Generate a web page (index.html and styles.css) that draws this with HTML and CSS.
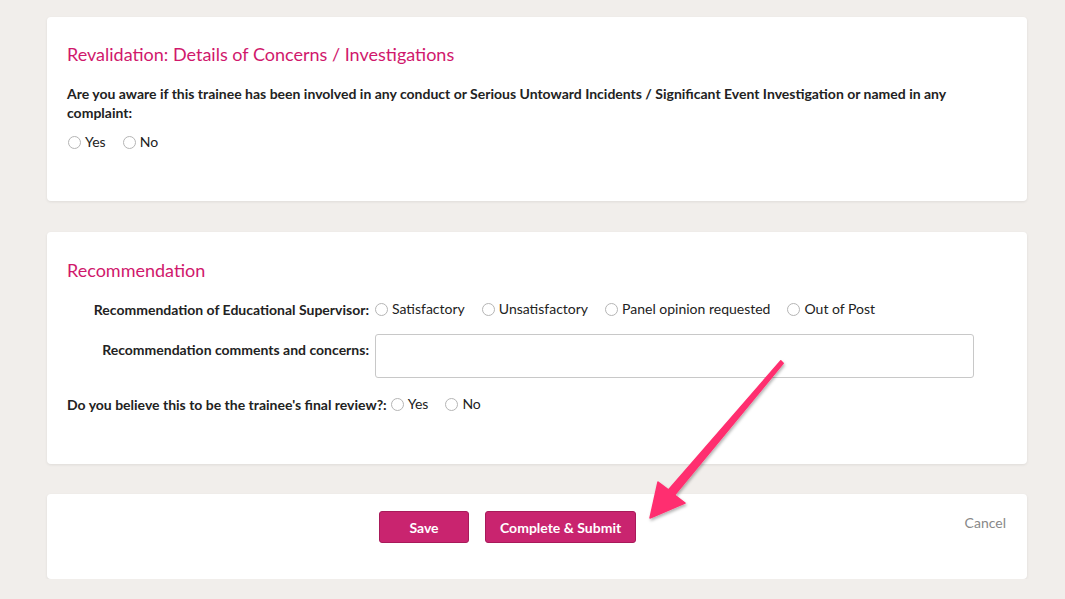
FILE: index.html
```html
<!DOCTYPE html>
<html lang="en">

<head>
    <meta charset="UTF-8">
    <meta name="viewport" content="width=device-width, initial-scale=1.0">
    <title>Review</title>
    <link rel="stylesheet" href="styles.css">
</head>

<body>
    <div class="page">
        <div class="card card-concerns">
            <h2 class="card-title">Revalidation: Details of Concerns / Investigations</h2>
            <p class="question">Are you aware if this trainee has been involved in any conduct or Serious Untoward Incidents / Significant Event Investigation or named in any complaint:</p>
            <div class="choices">
                <label class="choice"><input type="radio" name="concern"> Yes</label>
                <label class="choice"><input type="radio" name="concern"> No</label>
            </div>
        </div>

        <div class="card card-recommend">
            <h2 class="card-title">Recommendation</h2>
            <div class="form-row">
                <label class="row-label">Recommendation of Educational Supervisor:</label>
                <div class="choices">
                    <label class="choice"><input type="radio" name="rec"> Satisfactory</label>
                    <label class="choice"><input type="radio" name="rec"> Unsatisfactory</label>
                    <label class="choice"><input type="radio" name="rec"> Panel opinion requested</label>
                    <label class="choice"><input type="radio" name="rec"> Out of Post</label>
                </div>
            </div>
            <div class="form-row form-row-text">
                <label class="row-label">Recommendation comments and concerns:</label>
                <textarea class="comments"></textarea>
            </div>
            <div class="inline-row">
                <label class="inline-label">Do you believe this to be the trainee's final review?:</label>
                <div class="choices">
                    <label class="choice"><input type="radio" name="final"> Yes</label>
                    <label class="choice"><input type="radio" name="final"> No</label>
                </div>
            </div>
        </div>

        <div class="card card-actions">
            <div class="buttons">
                <button class="btn">Save</button>
                <button class="btn">Complete &amp; Submit</button>
            </div>
            <a class="cancel" href="#">Cancel</a>
        </div>
    </div>

    <svg class="arrow" width="1065" height="599" viewBox="0 0 1065 599">
        <defs>
            <filter id="shadow" x="-20%" y="-20%" width="140%" height="140%">
                <feDropShadow dx="1" dy="2" stdDeviation="1.5" flood-color="#000" flood-opacity="0.3" />
            </filter>
        </defs>
        <polygon points="783.2,363.2 674.6,495.1 685,503 650,518 658,482 668.4,489.9 780.8,360.8"
            fill="#ff2f6f" stroke="#ff2f6f" stroke-width="1.5" stroke-linejoin="round" filter="url(#shadow)" />
    </svg>
</body>

</html>
```

FILE: styles.css
```css
* {
    margin: 0;
    padding: 0;
    box-sizing: border-box;
}

body {
    background-color: #f1eeeb;
    font-family: Lato, "Open Sans", sans-serif;
    color: #222;
    font-size: 14px;
}

.page {
    width: 980px;
    margin-left: 47px;
    padding-top: 17px;
    display: grid;
    gap: 31px;
}

.card {
    background-color: #fff;
    border-radius: 4px;
    box-shadow: 0 1px 3px rgba(0, 0, 0, 0.08);
    padding: 0 20px;
}

.card-title {
    font-size: 18px;
    font-weight: 400;
    color: #d0186c;
    line-height: 22px;
}

.card-concerns {
    height: 184px;
    padding-top: 26px;
}

.card-concerns .card-title {
    margin-bottom: 19px;
}

.question {
    font-weight: bold;
    line-height: 19px;
}

.card-concerns .choices {
    margin-top: 11px;
}

.choices {
    display: flex;
    gap: 16px;
    align-items: center;
}

.choice {
    display: flex;
    align-items: center;
    gap: 4px;
    line-height: 18px;
}

.choice input {
    width: 13px;
    height: 13px;
    margin: 0 0 0 1px;
    appearance: none;
    border: 1px solid #b5b5b5;
    border-radius: 50%;
    background: #fff;
}

.card-recommend {
    height: 232px;
    padding-top: 27px;
}

.card-recommend .card-title {
    margin-bottom: 19px;
}

.form-row {
    display: grid;
    grid-template-columns: 302px 1fr;
    gap: 5px;
    align-items: center;
    margin-bottom: 16px;
    padding-right: 33px;
}

.row-label {
    text-align: right;
    font-weight: bold;
}

.form-row-text {
    align-items: start;
    margin-bottom: 17px;
}

.form-row-text .row-label {
    margin-top: 7px;
    line-height: 18px;
}

.comments {
    height: 44px;
    border: 1px solid #c8c8c8;
    border-radius: 3px;
    resize: none;
    margin-left: 1px;
}

.inline-row {
    display: flex;
    align-items: center;
    gap: 3px;
}

.inline-label {
    font-weight: bold;
}

.card-actions {
    height: 85px;
    margin-top: -1px;
    display: flex;
    justify-content: space-between;
    align-items: flex-start;
    padding-top: 17px;
}

.buttons {
    display: flex;
    gap: 16px;
    margin-left: 312px;
}

.btn {
    height: 32px;
    padding: 0 14px;
    min-width: 90px;
    background-color: #c9246f;
    border: 1px solid #a81a5a;
    border-radius: 3px;
    color: #fff;
    font-family: Lato, sans-serif;
    font-weight: bold;
    font-size: 14px;
}

.cancel {
    color: #888;
    text-decoration: none;
    margin-top: 3px;
    margin-right: 1px;
}

.arrow {
    position: absolute;
    left: 0;
    top: 0;
    pointer-events: none;
}
```
